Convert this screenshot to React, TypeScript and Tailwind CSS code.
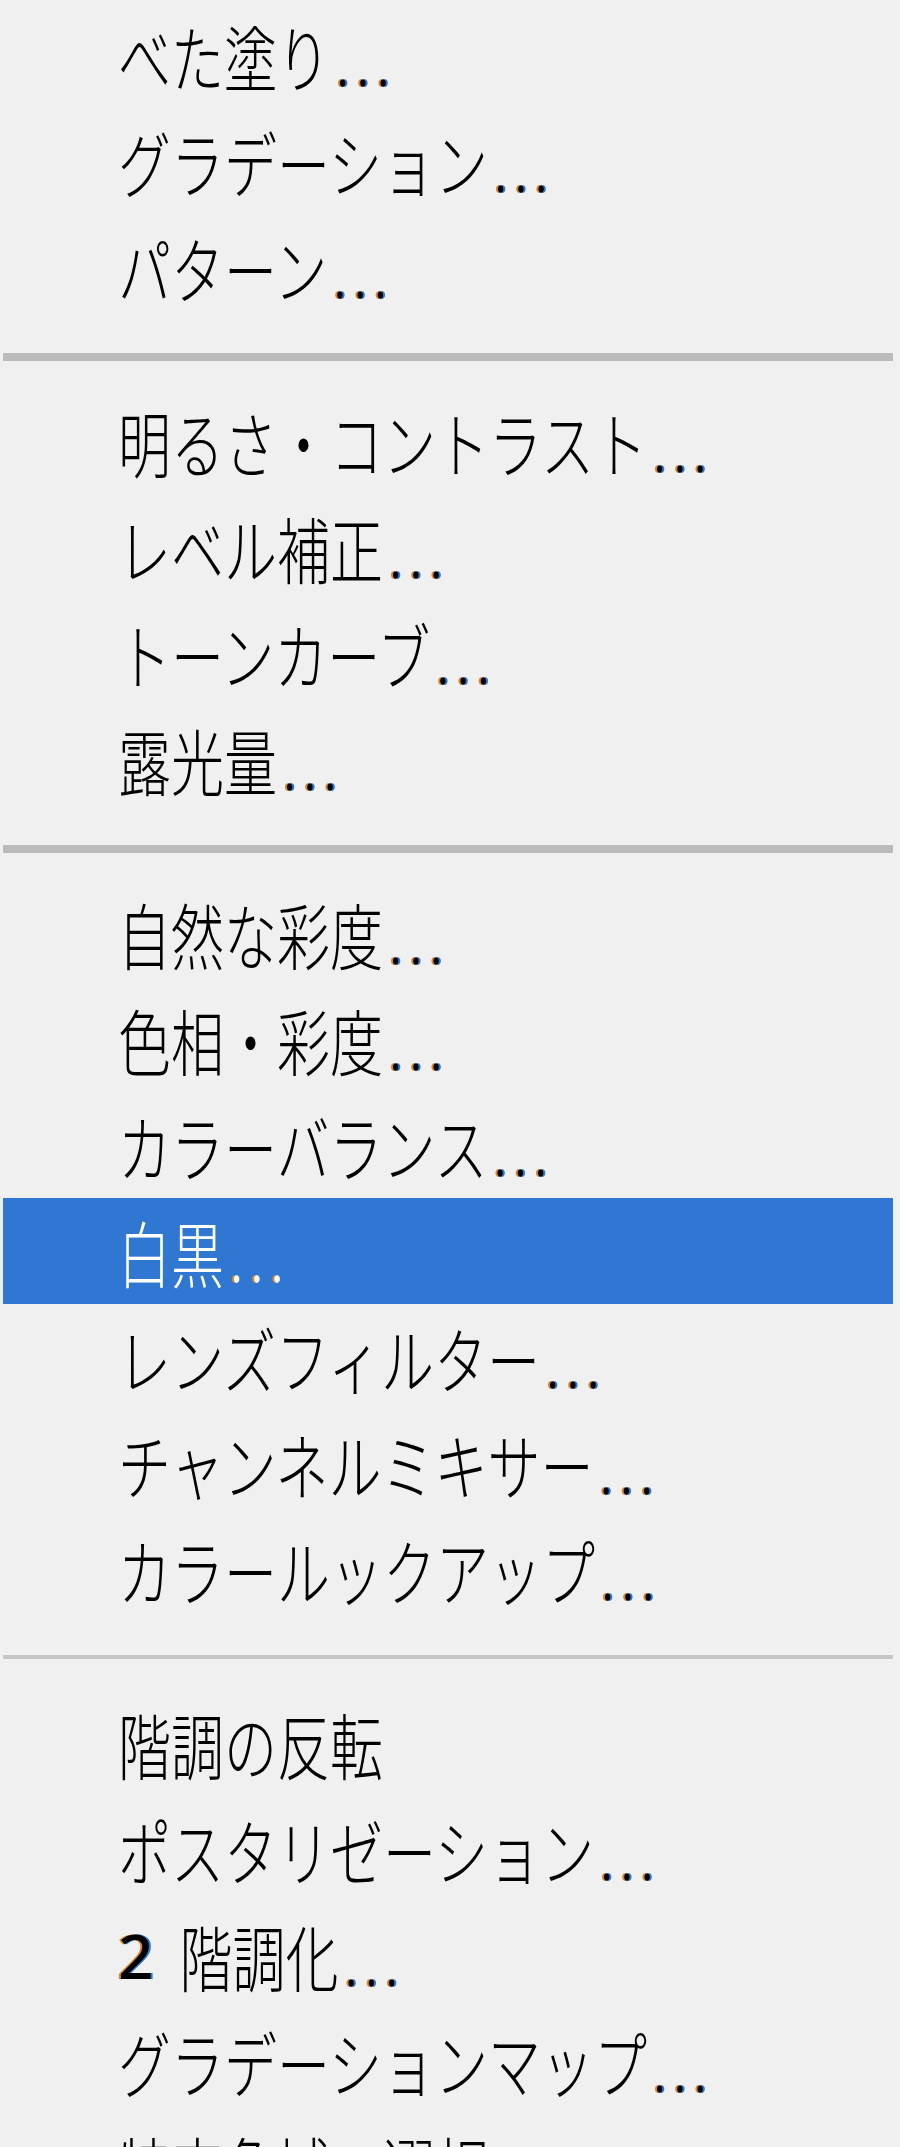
type Item = { label: string; lead?: string; dots?: boolean; active?: boolean };

const groups: Item[][] = [
  [
    { label: "べた塗り", dots: true },
    { label: "グラデーション", dots: true },
    { label: "パターン", dots: true },
  ],
  [
    { label: "明るさ・コントラスト", dots: true },
    { label: "レベル補正", dots: true },
    { label: "トーンカーブ", dots: true },
    { label: "露光量", dots: true },
  ],
  [
    { label: "自然な彩度", dots: true },
    { label: "色相・彩度", dots: true },
    { label: "カラーバランス", dots: true },
    { label: "白黒", dots: true, active: true },
    { label: "レンズフィルター", dots: true },
    { label: "チャンネルミキサー", dots: true },
    { label: "カラールックアップ", dots: true },
  ],
  [
    { label: "階調の反転" },
    { label: "ポスタリゼーション", dots: true },
    { label: "階調化", lead: "2", dots: true },
    { label: "グラデーションマップ", dots: true },
    { label: "特定色域の選択", dots: true },
  ],
];

function MenuItem({ item }: { item: Item }) {
  return (
    <div
      className={
        "flex h-[106px] items-center pl-[115px] " +
        (item.active ? "bg-[#3077d1] text-white" : "text-black")
      }
    >
      {item.lead && (
        <span className="mr-[26px] font-['Noto_Sans',sans-serif] text-[62px] leading-none font-medium [text-shadow:-2px_0_#d9892c,2px_0_#2b7ad6]">
          {item.lead}
        </span>
      )}
      <span className="inline-block scale-y-[1.36] font-['Noto_Sans_CJK_JP','Noto_Sans',sans-serif] text-[53px] leading-none font-light whitespace-nowrap">
        {item.label}
        {item.dots && (
          <span className="pl-[6px] tracking-[7px] [text-shadow:-2px_0_#d9892c,2px_0_#2b7ad6]">...</span>
        )}
      </span>
    </div>
  );
}

function Separator({ thin }: { thin?: boolean }) {
  return (
    <div className="h-[68px] pt-[33px]">
      <div className={thin ? "h-[4px] bg-[#c6c6c6]" : "h-[8px] bg-[#bbbbbb]"} />
    </div>
  );
}

export default function App() {
  return (
    <div className="h-[2147px] w-[900px] overflow-hidden bg-[#f0f0f0] pt-[2px] pr-[7px] pl-[3px]">
      {groups.map((g, gi) => (
        <div key={gi}>
          {gi > 0 && <Separator thin={gi === 3} />}
          {g.map((item) => (
            <MenuItem key={item.label} item={item} />
          ))}
        </div>
      ))}
    </div>
  );
}
